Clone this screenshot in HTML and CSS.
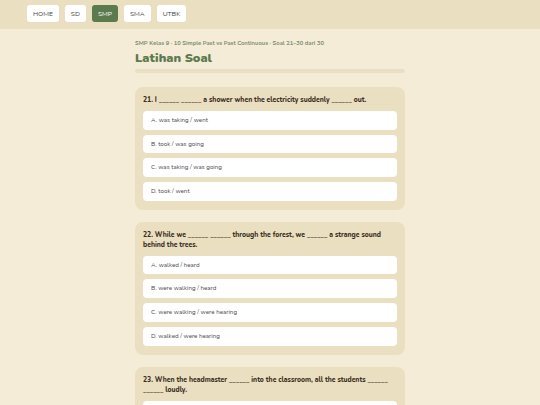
FILE: index.html
```html
<!DOCTYPE html>
<html lang="id">
<head>
<meta charset="utf-8">
<title>Latihan Soal</title>
<link rel="stylesheet" href="styles.css">
</head>
<body>
<header class="topbar">
  <nav class="nav">
    <a class="nav-btn" href="#">HOME</a>
    <a class="nav-btn" href="#">SD</a>
    <a class="nav-btn active" href="#">SMP</a>
    <a class="nav-btn" href="#">SMA</a>
    <a class="nav-btn" href="#">UTBK</a>
  </nav>
</header>
<main class="main">
  <p class="crumb">SMP Kelas 9 · 10 Simple Past vs Past Continuous · Soal 21–30 dari 30</p>
  <h1 class="title">Latihan Soal</h1>
  <div class="progress"><div class="progress-fill"></div></div>

  <section class="card">
    <p class="question">21. I ______ ______ a shower when the electricity suddenly ______ out.</p>
    <div class="options">
      <div class="option">A. was taking / went</div>
      <div class="option">B. took / was going</div>
      <div class="option">C. was taking / was going</div>
      <div class="option">D. took / went</div>
    </div>
  </section>

  <section class="card">
    <p class="question">22. While we ______ ______ through the forest, we ______ a strange sound behind the trees.</p>
    <div class="options">
      <div class="option">A. walked / heard</div>
      <div class="option">B. were walking / heard</div>
      <div class="option">C. were walking / were hearing</div>
      <div class="option">D. walked / were hearing</div>
    </div>
  </section>

  <section class="card">
    <p class="question">23. When the headmaster ______ into the classroom, all the students ______ ______ loudly.</p>
    <div class="options">
      <div class="option">A. came / were laughing</div>
      <div class="option">B. was coming / laughed</div>
      <div class="option">C. came / laughed</div>
      <div class="option">D. was coming / were laughing</div>
    </div>
  </section>
</main>
</body>
</html>
```

FILE: styles.css
```css
* { box-sizing: border-box; }
html, body { margin: 0; padding: 0; }
body {
  background: #f5ecd8;
  font-family: "Nunito", Lato, "Noto Sans", sans-serif;
  color: #3d3427;
}
.topbar {
  background: #ebdfc2;
  height: 29px;
  padding: 5px 0 0 27px;
}
.nav { display: flex; gap: 6px; }
.nav-btn {
  display: block;
  height: 17px;
  line-height: 17px;
  padding: 0 6px;
  background: #ffffff;
  border-radius: 3px;
  font-size: 6.7px;
  color: #444;
  text-decoration: none;
}
.nav-btn.active { background: #5b7a4e; color: #fff; }
.main {
  width: 270px;
  margin: 0 auto;
  padding-top: 10px;
}
.crumb {
  margin: 0;
  font-size: 5.85px;
  font-weight: 700;
  color: #7d8e6c;
  line-height: 8px;
}
.title {
  margin: 3px 0 0;
  font-size: 12.6px;
  font-weight: 900;
  color: #5b7a4e;
  line-height: 16px;
}
.progress {
  margin-top: 3px;
  height: 4px;
  border-radius: 2px;
  background: #eadfc4;
}
.progress-fill { width: 0; height: 100%; }
.card {
  margin-top: 14px;
  background: #ebdfc2;
  border-radius: 8px;
  padding: 8px 8px 9px;
}
.card + .card { margin-top: 12px; }
.question {
  margin: 0 0 6px;
  font-size: 6.8px;
  font-weight: 800;
  line-height: 10px;
  color: #3a2f20;
}
.options { display: flex; flex-direction: column; gap: 5px; }
.option {
  background: #fff;
  border-radius: 4px;
  height: 18.7px;
  line-height: 18.7px;
  padding: 0 8px;
  font-size: 6.2px;
  color: #4a4a4a;
}
```
